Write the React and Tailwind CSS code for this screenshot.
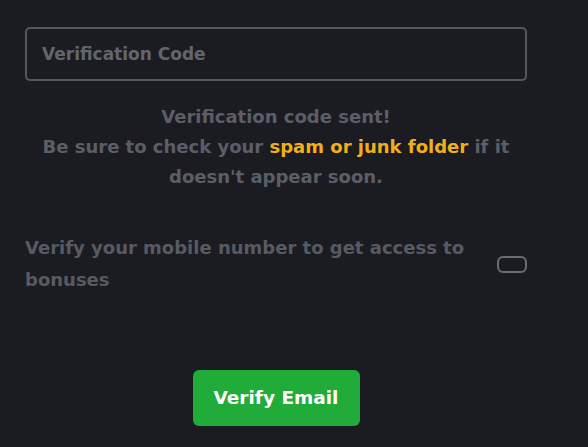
import React from "react";

function App() {
  return (
    <div
      className="w-full h-[447px] bg-[#1b1c21] pl-[25px] pr-[61px] pt-[27px]"
      style={{ fontFamily: "'DejaVu Sans', 'Open Sans', sans-serif" }}
    >
      {/* Code input */}
      <input
        type="text"
        placeholder="Verification Code"
        className="w-full h-[54px] bg-transparent border-2 border-[#55575d] rounded-[5px] pl-[15px] text-[17px] font-bold text-[#6b6e76] placeholder-[#62656d] outline-none"
      />

      {/* Notice */}
      <p className="mt-[21px] px-[6px] text-center text-[18px] leading-[30px] font-bold text-[#5b5e66]">
        Verification code sent!
        <br />
        Be sure to check your <span className="text-[#f0b01c]">spam or junk folder</span> if it doesn't appear soon.
      </p>

      {/* Mobile verification row */}
      <div className="mt-[40px] flex items-center justify-between">
        <p className="w-[462px] text-[18px] leading-[32px] font-bold text-[#575a62]">
          Verify your mobile number to get access to bonuses
        </p>
        <button className="w-[30px] h-[17px] rounded-[6px] border-2 border-[#6b6d73]" />
      </div>

      {/* Submit */}
      <div className="mt-[74px] flex justify-center">
        <button className="w-[167px] h-[56px] rounded-[6px] bg-[#21ab38] text-white text-[18.5px] font-bold">
          Verify Email
        </button>
      </div>
    </div>
  );
}

export default App;
